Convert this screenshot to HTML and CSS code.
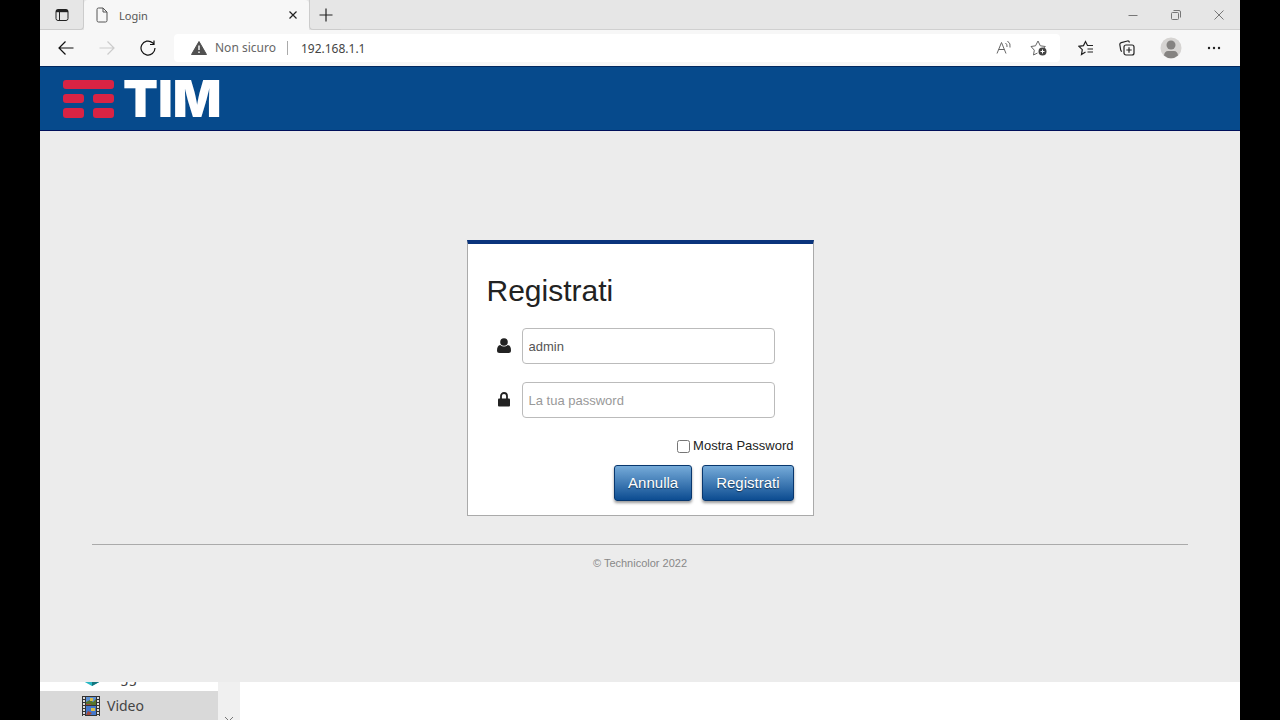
FILE: index.html
```html
<!DOCTYPE html>
<html lang="it">

<head>
    <meta charset="UTF-8" />
    <meta name="viewport" content="width=device-width, initial-scale=1.0" />
    <title>Login</title>
    <link rel="stylesheet" href="styles.css">
</head>

<body>
    <div class="desktop">
        <div class="browser">
            <!-- Tabs -->
            <div class="tab-bar">
                <button class="icon-btn tab-menu" aria-label="Menu schede">
                    <svg width="14" height="14" viewBox="0 0 14 14" fill="none" stroke="#222">
                        <rect x="1" y="1.5" width="12" height="11" rx="2" />
                        <path d="M1 3h12" stroke-width="2.4" />
                        <path d="M4.5 4v8.500" />
                    </svg>
                </button>
                <div class="tab">
                    <svg width="12" height="16" viewBox="0 0 12 16" fill="none" stroke="#555">
                        <path d="M2.500 1H7l4 4v8.500a1.500 1.500 0 0 1-1.500 1.500h-7A1.500 1.500 0 0 1 1 13.500v-11A1.500 1.500 0 0 1 2.500 1zM7 1v4h4" />
                    </svg>
                    <span class="tab-title">Login</span>
                    <button class="icon-btn tab-close" aria-label="Chiudi scheda">
                        <svg width="10" height="10" viewBox="0 0 10 10" fill="none" stroke="#222" stroke-width="1.2">
                            <path d="M1.500 1.500l7 7M8.500 1.500l-7 7" />
                        </svg>
                    </button>
                </div>
                <button class="icon-btn new-tab" aria-label="Nuova scheda">
                    <svg width="14" height="14" viewBox="0 0 14 14" fill="none" stroke="#222" stroke-width="1.2">
                        <path d="M7 .5v13M.5 7h13" />
                    </svg>
                </button>
                <div class="window-controls">
                    <button class="icon-btn" aria-label="Riduci a icona">
                        <svg width="12" height="12" viewBox="0 0 12 12" fill="none" stroke="#777"><path d="M1.500 6.500h9" /></svg>
                    </button>
                    <button class="icon-btn" aria-label="Ripristina">
                        <svg width="12" height="12" viewBox="0 0 12 12" fill="none" stroke="#777">
                            <rect x="1.500" y="3.500" width="7" height="7" rx="1" />
                            <path d="M3.500 1.500H9A1.500 1.500 0 0 1 10.500 3v5.500" />
                        </svg>
                    </button>
                    <button class="icon-btn" aria-label="Chiudi">
                        <svg width="12" height="12" viewBox="0 0 12 12" fill="none" stroke="#777"><path d="M1.500 1.500l9 9M10.500 1.500l-9 9" /></svg>
                    </button>
                </div>
            </div>

            <!-- Toolbar -->
            <div class="toolbar">
                <div class="nav-buttons">
                    <button class="icon-btn" aria-label="Indietro">
                        <svg width="16" height="16" viewBox="0 0 16 16" fill="none" stroke="#111" stroke-width="1.2"><path d="M15.500 8H1M7.500 1.500L1 8l6.500 6.500" /></svg>
                    </button>
                    <button class="icon-btn" aria-label="Avanti" disabled>
                        <svg width="16" height="16" viewBox="0 0 16 16" fill="none" stroke="#ccc" stroke-width="1.2"><path d="M.5 8H15M8.500 1.500L15 8l-6.500 6.500" /></svg>
                    </button>
                    <button class="icon-btn" aria-label="Aggiorna">
                        <svg width="16" height="16" viewBox="0 0 16 16" fill="none" stroke="#111" stroke-width="1.2"><path d="M15 8a7 7 0 1 1-2.500-5.300L14 4.300M14 .5v4h-4" /></svg>
                    </button>
                </div>
                <div class="address-bar">
                    <svg width="16" height="14" viewBox="0 0 16 14">
                        <path d="M8 .5L15.500 13.500H.5z" fill="#505050" stroke="#505050" stroke-linejoin="round" />
                        <path d="M8 4.500v4.500M8 10.500v1.500" stroke="#fff" stroke-width="1.4" />
                    </svg>
                    <span class="not-secure">Non sicuro</span>
                    <input class="url" type="text" value="192.168.1.1" aria-label="Indirizzo">
                    <button class="icon-btn" aria-label="Leggi ad alta voce">
                        <svg width="16" height="16" viewBox="0 0 16 16" fill="none" stroke="#666">
                            <path d="M1 13.500L5.500 2.500 10 13.500M2.700 9.500h5.600" />
                            <path d="M9.500 3q2 1.500 1.500 4M11.500 1q3.500 2.500 2.500 6.500" />
                        </svg>
                    </button>
                    <button class="icon-btn" aria-label="Aggiungi ai preferiti">
                        <svg width="18" height="16" viewBox="0 0 18 16" fill="none" stroke="#666">
                            <path d="M7.500 13L3.500 15l.8-4.800L1 6.500l4.500-.7L8 1l2.300 4.800 5 .7-1.500 1.500" />
                            <circle cx="12.500" cy="11.500" r="4" fill="#444" stroke="none" />
                            <path d="M12.500 9.500v4M10.500 11.500h4" stroke="#fff" />
                        </svg>
                    </button>
                </div>
                <div class="tool-buttons">
                    <button class="icon-btn" aria-label="Preferiti">
                        <svg width="16" height="16" viewBox="0 0 16 16" fill="none" stroke="#222" stroke-width="1.2">
                            <path d="M7.500 12L3.500 14.500l.8-4.800L1 6.300l4.500-.7L7.500 1.500l2 4H15M9.500 9H15M9.500 12H15" />
                        </svg>
                    </button>
                    <button class="icon-btn" aria-label="Raccolte">
                        <svg width="16" height="16" viewBox="0 0 16 16" fill="none" stroke="#222" stroke-width="1.2">
                            <rect x="5" y="5" width="10" height="10" rx="2" />
                            <path d="M10 7.300v5.400M7.300 10h5.400M3 11.500Q1.800 11 1.700 10L.8 4.500Q.7 3 2.200 2.600L8.500 1Q10 .7 10.500 2.500" />
                        </svg>
                    </button>
                    <button class="icon-btn" aria-label="Profilo">
                        <svg width="22" height="22" viewBox="0 0 22 22">
                            <circle cx="11" cy="11" r="10.500" fill="#d6d4d2" />
                            <circle cx="11" cy="8" r="4.500" fill="#858381" />
                            <path d="M4 18.500Q4.500 14 8 14h6q3.500 0 4 4.500a10.500 10.500 0 0 1-14 0z" fill="#858381" />
                        </svg>
                    </button>
                    <button class="icon-btn" aria-label="Impostazioni e altro">
                        <svg width="14" height="4" viewBox="0 0 14 4" fill="#222">
                            <circle cx="2" cy="2" r="1.200" /><circle cx="7" cy="2" r="1.200" /><circle cx="12" cy="2" r="1.200" />
                        </svg>
                    </button>
                </div>
            </div>

            <!-- Router login page -->
            <div class="page">
                <header class="page-header">
                    <svg width="51" height="38" viewBox="0 0 51 38" fill="#d92344">
                        <rect width="51" height="9" rx="3" />
                        <rect y="14" width="21" height="9" rx="3" />
                        <rect x="30" y="14" width="21" height="9" rx="3" />
                        <rect y="28" width="21" height="10" rx="3" />
                        <rect x="30" y="28" width="21" height="10" rx="3" />
                    </svg>
                    <span class="brand">TIM</span>
                </header>

                <form class="login-card">
                    <h1>Registrati</h1>
                    <div class="field">
                        <label for="username" aria-label="Nome utente">
                            <svg width="14" height="16" viewBox="0 0 14 16" fill="#222">
                                <circle cx="7" cy="4" r="3.800" />
                                <path d="M3.200 7Q7 10 10.800 7 14 7.500 14 12.500q0 2.500-2.500 2.500h-9Q0 15 0 12.500 0 7.500 3.200 7z" />
                            </svg>
                        </label>
                        <input type="text" id="username" value="admin">
                    </div>
                    <div class="field">
                        <label for="password" aria-label="Password">
                            <svg width="12" height="16" viewBox="0 0 12 16">
                                <path d="M3 8V4a3 3 0 0 1 6 0V8" fill="none" stroke="#222" stroke-width="1.800" />
                                <rect y="6.500" width="12" height="8" rx="1" fill="#222" />
                            </svg>
                        </label>
                        <input type="password" id="password" placeholder="La tua password">
                    </div>
                    <div class="show-password">
                        <input type="checkbox" id="showPassword">
                        <label for="showPassword">Mostra Password</label>
                    </div>
                    <div class="actions">
                        <button class="btn" type="reset">Annulla</button>
                        <button class="btn" type="button">Registrati</button>
                    </div>
                </form>

                <footer class="page-footer">© Technicolor 2022</footer>
            </div>
        </div>

        <!-- File explorer behind the browser -->
        <div class="explorer">
            <ul class="folders">
                <li>
                    <svg width="20" height="20" viewBox="0 0 20 20">
                        <path d="M10 1l9 5v8l-9 5-9-5V6z" fill="#28b8c4" />
                        <path d="M10 10l9-4v8l-9 5z" fill="#15747d" />
                    </svg>
                    Oggetti 3D
                </li>
                <li class="selected">
                    <svg width="18" height="20" viewBox="0 0 18 20">
                        <rect width="18" height="20" fill="#333" />
                        <rect x="4" y="1" width="10" height="8" fill="#5f91d4" />
                        <rect x="4" y="10" width="10" height="9" fill="#4378cc" />
                        <path d="M4 6l4-2 3 2 3-3v6H4z" fill="#57752d" />
                        <path d="M8 2h3v3H8zM9 12h4v3H9z" fill="#d8bd48" />
                        <path d="M4 8h5v1H4zM6 15l4 2-2 2H4z" fill="#a34b3d" />
                        <path d="M2 1v19M16 1v19" stroke="#ddd" stroke-width="2" stroke-dasharray="2 1" />
                    </svg>
                    Video
                </li>
            </ul>
            <div class="scrollbar">
                <svg width="10" height="4" viewBox="0 0 10 4" fill="none" stroke="#777"><path d="M1 1l4 4 4-4" /></svg>
            </div>
        </div>
    </div>

    <script>
        const passwordEl = document.getElementById('password');
        const showPasswordEl = document.getElementById('showPassword');

        showPasswordEl.addEventListener('change', function () {
            passwordEl.type = showPasswordEl.checked ? 'text' : 'password';
        });
    </script>
</body>

</html>
```
FILE: styles.css
```css
* {
    box-sizing: border-box;
}

body {
    margin: 0;
    padding: 0 40px;
    background: #000;
    font-family: "Liberation Sans", Arial, sans-serif;
    color: #222;
}

svg {
    display: block;
    flex-shrink: 0;
}

.desktop {
    display: flex;
    flex-direction: column;
    height: 100vh;
    background: #fff;
    overflow: hidden;
}

.browser {
    display: flex;
    flex-direction: column;
    flex: 1;
    min-height: 0;
    font-family: "Noto Sans", "Open Sans", sans-serif;
}

.icon-btn {
    display: flex;
    align-items: center;
    justify-content: center;
    padding: 0;
    border: none;
    background: transparent;
}

/* Tabs */
.tab-bar {
    display: flex;
    height: 30px;
    background: #e6e6e6;
}

.tab-menu {
    width: 44px;
    border-right: 1px solid #ccc;
    border-bottom: 1px solid #ccc;
    border-radius: 0 0 4px 0;
}

.tab {
    display: flex;
    align-items: center;
    gap: 11px;
    width: 225px;
    padding: 0 11px 0 12px;
    background: #f7f7f7;
    border-radius: 4px 4px 0 0;
    font-size: 11px;
    color: #555;
}

.tab-close {
    margin-left: auto;
}

.new-tab {
    width: 32px;
    border-left: 1px solid #ccc;
    border-bottom: 1px solid #ccc;
    border-radius: 0 0 0 4px;
}

.window-controls {
    display: flex;
    flex: 1;
    justify-content: flex-end;
    border-bottom: 1px solid #d0d0d0;
}

.window-controls .icon-btn {
    width: 43px;
}

/* Toolbar */
.toolbar {
    display: flex;
    align-items: center;
    height: 36px;
    background: #f7f7f7;
}

.nav-buttons {
    display: flex;
    gap: 25px;
    padding: 0 18px;
}

.address-bar {
    display: flex;
    align-items: center;
    gap: 8px;
    flex: 1;
    height: 28px;
    padding: 0 12px 0 17px;
    background: #fff;
    border-radius: 4px;
    font-size: 12px;
}

.address-bar .icon-btn {
    margin-left: 10px;
}

.not-secure {
    padding-right: 11px;
    border-right: 1px solid #aaa;
    line-height: 14px;
    color: #666;
}

.url {
    flex: 1;
    min-width: 0;
    padding: 0 5px;
    border: none;
    outline: none;
    background: transparent;
    font: inherit;
    color: #444;
}

.tool-buttons {
    display: flex;
    align-items: center;
    justify-content: space-between;
    width: 180px;
    padding: 0 19px 0 18px;
}

/* Login page */
.page {
    display: flex;
    flex-direction: column;
    flex: 1;
    background: #ececec;
    font-family: "Liberation Sans", Arial, sans-serif;
}

.page-header {
    display: flex;
    align-items: center;
    gap: 9px;
    height: 65px;
    padding: 0 23px;
    background: #064a8c;
    border-top: 1px solid #00285f;
    border-bottom: 1px solid #00105a;
}

.brand {
    font-family: Inter, sans-serif;
    font-size: 51px;
    font-weight: 900;
    line-height: 64px;
    color: #fff;
}

.login-card {
    width: 347px;
    margin: 109px auto 28px;
    padding: 30px 19px 14px;
    background: #fff;
    border: 1px solid #aaa;
    border-top: 4px solid #0a347c;
}

.login-card h1 {
    margin: 0 0 20px;
    font-size: 30px;
    font-weight: normal;
    line-height: 34px;
}

.field {
    display: flex;
    align-items: center;
    margin-bottom: 18px;
    padding-right: 19px;
}

.field label {
    display: flex;
    justify-content: center;
    width: 35px;
}

.field input {
    flex: 1;
    min-width: 0;
    height: 36px;
    padding: 0 6px;
    border: 1px solid #bbb;
    border-radius: 4px;
    background: #fff;
    font: inherit;
    font-size: 13px;
    color: #555;
}

.field input::placeholder {
    color: #999;
}

.show-password {
    display: flex;
    align-items: center;
    justify-content: flex-end;
    gap: 3px;
    margin-bottom: 9px;
    font-size: 13px;
    line-height: 20px;
}

.show-password input {
    margin: 0;
}

.actions {
    display: flex;
    justify-content: flex-end;
    gap: 10px;
}

.btn {
    height: 36px;
    padding: 0 13px 2px;
    border: 1px solid #08376e;
    border-radius: 3px;
    background: linear-gradient(#76abd9, #0c4c91);
    box-shadow: 0 2px 3px rgba(0, 0, 0, 0.4);
    font: inherit;
    font-size: 15px;
    color: #fff;
    text-shadow: 0 1px 1px rgba(0, 0, 0, 0.5);
    cursor: pointer;
}

.page-footer {
    margin: 0 52px;
    padding-top: 12px;
    border-top: 1px solid #aaa;
    text-align: center;
    font-size: 11px;
    color: #888;
}

/* File explorer */
.explorer {
    display: flex;
    height: 38px;
    overflow: hidden;
}

.folders {
    display: flex;
    flex-direction: column;
    justify-content: flex-end;
    width: 178px;
    margin: 0;
    padding: 0;
    list-style: none;
    font-family: "Noto Sans", "Open Sans", sans-serif;
    font-size: 14px;
    color: #444;
}

.folders li {
    display: flex;
    align-items: center;
    gap: 7px;
    flex-shrink: 0;
    height: 29px;
    padding-left: 42px;
}

.folders .selected {
    background: #d9d9d9;
}

.scrollbar {
    display: flex;
    align-items: flex-end;
    justify-content: center;
    width: 22px;
    background: #f0f0f0;
}
```
